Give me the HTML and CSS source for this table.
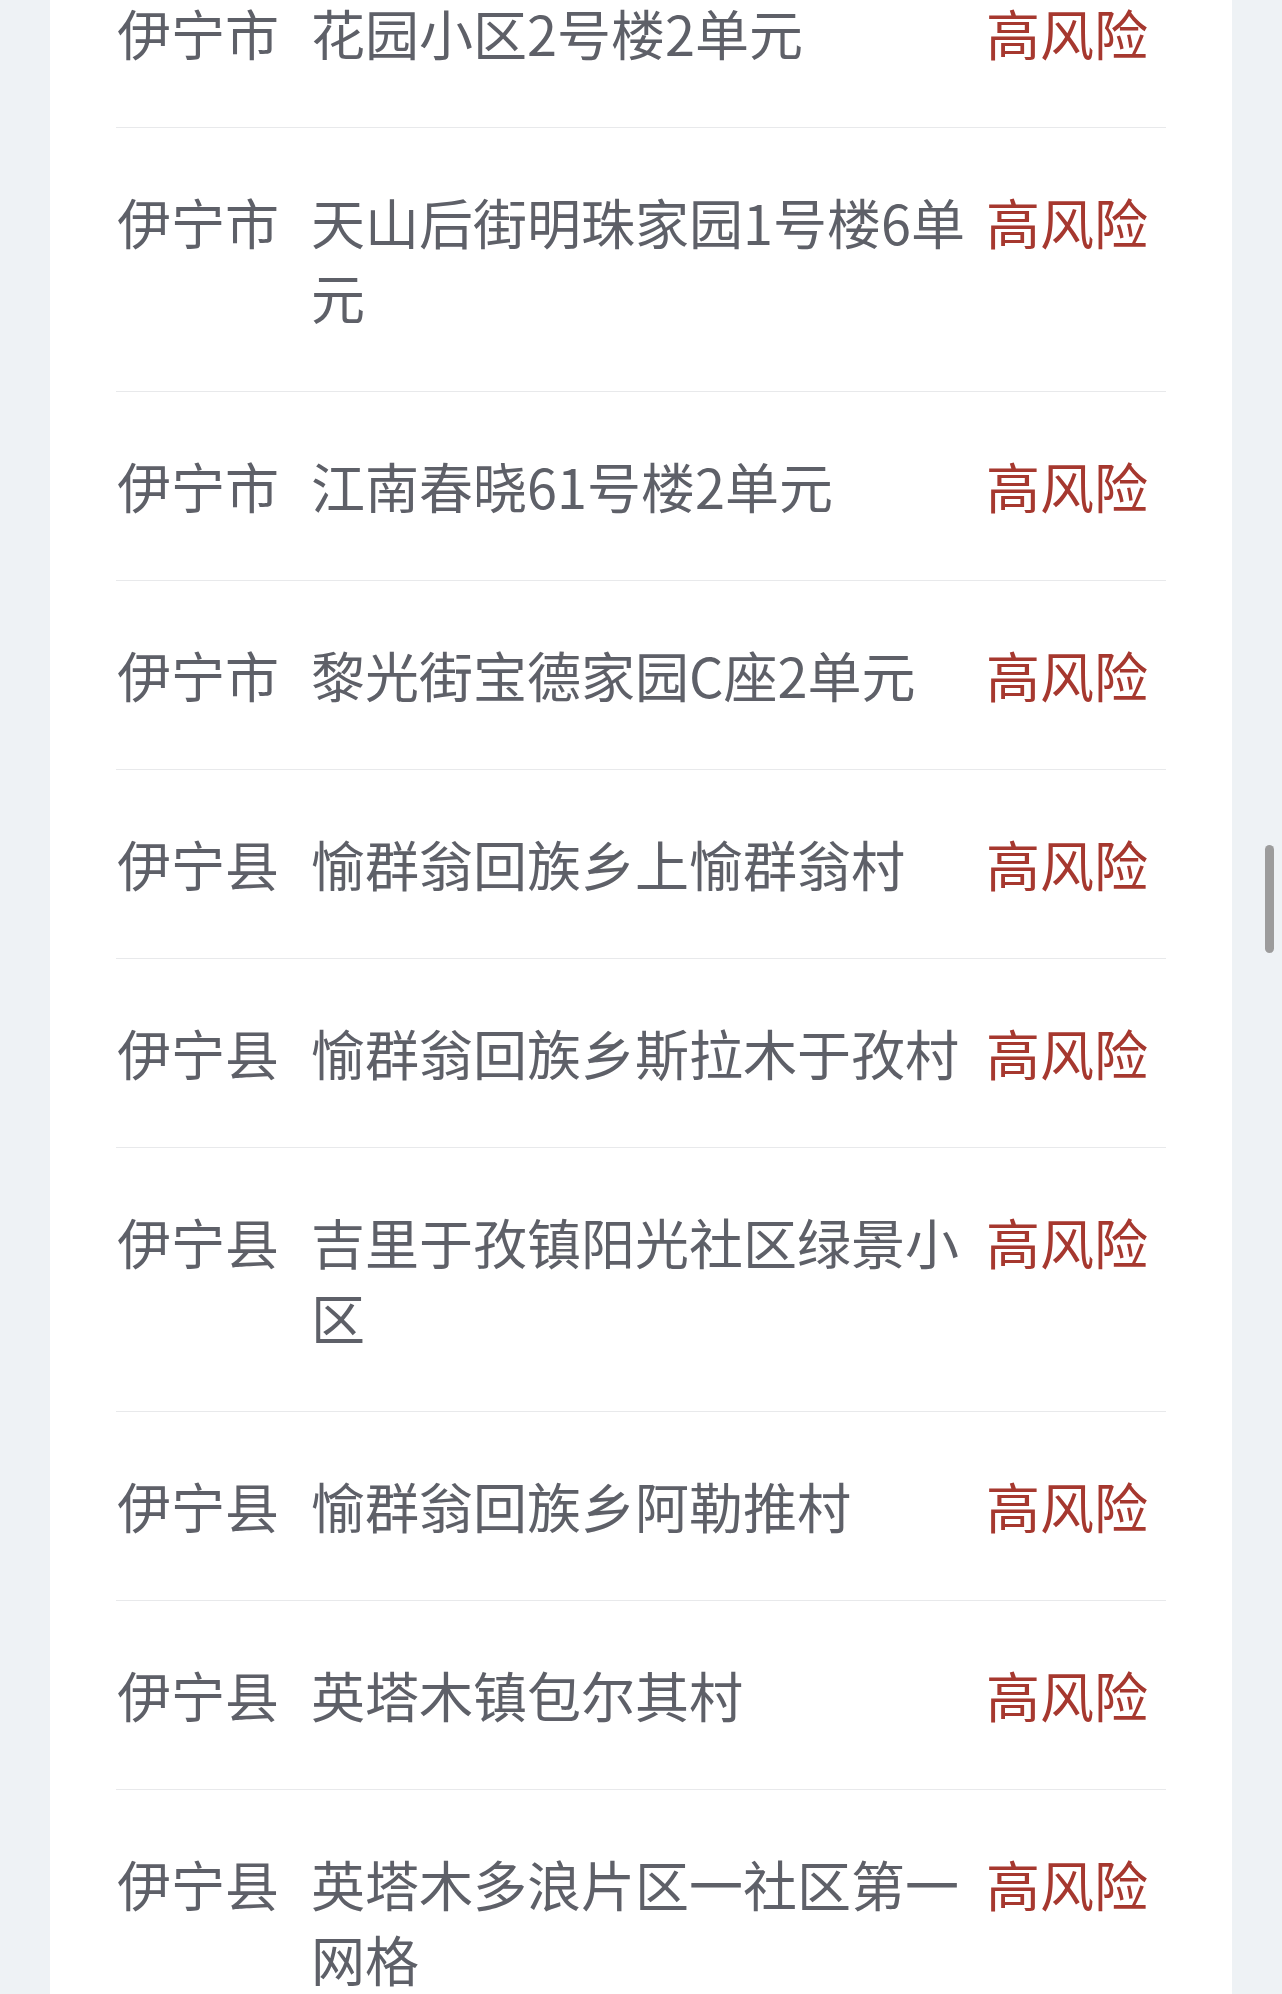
FILE: index.html
```html
<!DOCTYPE html>
<html lang="zh-CN">
<head>
<meta charset="utf-8">
<title>风险地区</title>
<link rel="stylesheet" href="styles.css">
</head>
<body>
<div class="page">
  <div class="card">
    <ul class="list">
      <li class="row"><span class="city">伊宁市</span><span class="addr">花园小区2号楼2单元</span><span class="risk">高风险</span></li>
      <li class="row"><span class="city">伊宁市</span><span class="addr">天山后街明珠家园1号楼6单元</span><span class="risk">高风险</span></li>
      <li class="row"><span class="city">伊宁市</span><span class="addr">江南春晓61号楼2单元</span><span class="risk">高风险</span></li>
      <li class="row"><span class="city">伊宁市</span><span class="addr">黎光街宝德家园C座2单元</span><span class="risk">高风险</span></li>
      <li class="row"><span class="city">伊宁县</span><span class="addr">愉群翁回族乡上愉群翁村</span><span class="risk">高风险</span></li>
      <li class="row"><span class="city">伊宁县</span><span class="addr">愉群翁回族乡斯拉木于孜村</span><span class="risk">高风险</span></li>
      <li class="row"><span class="city">伊宁县</span><span class="addr">吉里于孜镇阳光社区绿景小区</span><span class="risk">高风险</span></li>
      <li class="row"><span class="city">伊宁县</span><span class="addr">愉群翁回族乡阿勒推村</span><span class="risk">高风险</span></li>
      <li class="row"><span class="city">伊宁县</span><span class="addr">英塔木镇包尔其村</span><span class="risk">高风险</span></li>
      <li class="row"><span class="city">伊宁县</span><span class="addr">英塔木多浪片区一社区第一网格</span><span class="risk">高风险</span></li>
    </ul>
  </div>
  <div class="scrollbar"></div>
</div>
</body>
</html>
```
FILE: styles.css
```css
html, body {
  margin: 0;
  padding: 0;
  background: #eef2f5;
}
body {
  width: 1282px;
  height: 1994px;
  overflow: hidden;
  font-family: "Noto Sans CJK SC", "Noto Sans", sans-serif;
}
.page {
  position: relative;
  height: 1994px;
  overflow: hidden;
}
.card {
  margin: -61px 50px 0;
  background: #ffffff;
  padding: 0 66px;
}
.list {
  list-style: none;
  margin: 0;
  padding: 0;
}
.row {
  display: grid;
  grid-template-columns: 195px 675px 1fr;
  padding: 56px 0 57px;
  border-bottom: 1px solid #e8e9eb;
  font-size: 54px;
  line-height: 75px;
  color: #5e6068;
}
.city {
  padding-left: 1px;
}
.risk {
  color: #a6382f;
}
.scrollbar {
  position: absolute;
  left: 1265px;
  top: 845px;
  width: 9px;
  height: 108px;
  border-radius: 5px;
  background: #9c9c9c;
}
```
